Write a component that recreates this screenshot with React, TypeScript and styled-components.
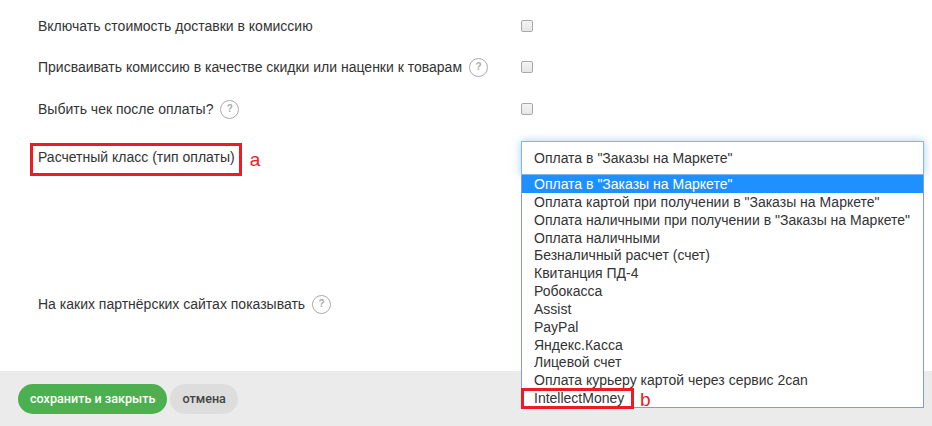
import React from 'react';
import styled, { createGlobalStyle } from 'styled-components';

const RED = '#ed1c24';

const GlobalStyle = createGlobalStyle`
    html, body {
        margin: 0;
        padding: 0;
        background: white;
    }
    body {
        font-family: "Liberation Sans", Arial, sans-serif;
        font-size: 14px;
        color: #333;
    }
`;

const Screen = styled.div`
    width: 932px;
    height: 426px;
    display: flex;
    flex-direction: column;
    overflow: hidden;
`;

const Form = styled.div`
    flex: 1;
    min-height: 0;
    padding: 5px 9px 0 38px;
`;

const Row = styled.div<{ $height: number }>`
    display: grid;
    grid-template-columns: 483px 402px;
    align-items: center;
    height: ${(p) => p.$height}px;
`;

const PartnersRow = styled(Row)`
    margin-top: 74px;
`;

const Label = styled.div`
    display: flex;
    align-items: center;
    gap: 7px;
    line-height: 20px;
`;

const Help = styled.span`
    width: 17px;
    height: 17px;
    border: 1px solid #aaa;
    border-radius: 50%;
    display: inline-flex;
    align-items: center;
    justify-content: center;
    color: #aaa;
    font-size: 10px;
    font-weight: bold;
    flex: none;
`;

const Check = styled.span`
    width: 10px;
    height: 10px;
    border: 1px solid #a9a9a9;
    border-radius: 2px;
    background: linear-gradient(#f4f4f4, #e6e6e6);
`;

const MarkedRow = styled.div`
    display: flex;
    align-items: center;
    margin-left: -8px;
    margin-top: 2px;
`;

const MarkedLabel = styled.div`
    border: 3px solid ${RED};
    padding: 0 4px 0 5px;
    height: 27px;
    line-height: 23px;
`;

const Note = styled.span`
    color: ${RED};
    font-size: 19px;
    line-height: 20px;
`;

const LabelNote = styled(Note)`
    margin-left: 8px;
    margin-top: 2px;
`;

const SelectBox = styled.div`
    position: relative;
    height: 34px;
    width: 403px;
`;

const SelectValue = styled.div`
    box-sizing: border-box;
    height: 34px;
    padding-left: 12px;
    line-height: 32px;
    border: 1px solid #80b5f5;
    background: white;
    box-shadow: 0 0 8px rgba(102, 175, 233, 0.6);
`;

const Dropdown = styled.div`
    position: absolute;
    top: 34px;
    left: 0;
    right: 0;
    box-sizing: border-box;
    border: 1px solid #7f9ddb;
    border-top: none;
    background: white;
    z-index: 2;
`;

const Option = styled.div<{ $selected?: boolean }>`
    height: 17.85px;
    line-height: 18px;
    padding-left: 12px;
    white-space: nowrap;
    background: ${(p) => (p.$selected ? '#1e90ff' : 'transparent')};
    color: ${(p) => (p.$selected ? 'white' : '#333')};
`;

const MarkedOption = styled(Option)`
    position: relative;
`;

const OptionFrame = styled.span`
    position: absolute;
    left: -1px;
    top: -1px;
    width: 107px;
    height: 15px;
    border: 3px solid ${RED};
`;

const OptionNote = styled(Note)`
    position: absolute;
    left: 118px;
    top: 1px;
`;

const Footer = styled.div`
    flex: none;
    height: 55px;
    background: #ebebeb;
    display: flex;
    align-items: center;
    gap: 3px;
    padding: 0 0 0 18px;
`;

const Button = styled.button<{ $primary?: boolean }>`
    height: 30px;
    border: none;
    border-radius: 15px;
    padding: 0 12px;
    font-family: Roboto, sans-serif;
    font-size: 12.6px;
    font-weight: 500;
    background: ${(p) => (p.$primary ? '#4caf50' : '#ddd')};
    color: ${(p) => (p.$primary ? 'white' : '#444')};
`;

const options = [
    'Оплата картой при получении в "Заказы на Маркете"',
    'Оплата наличными при получении в "Заказы на Маркете"',
    'Оплата наличными',
    'Безналичный расчет (счет)',
    'Квитанция ПД-4',
    'Робокасса',
    'Assist',
    'PayPal',
    'Яндекс.Касса',
    'Лицевой счет',
    'Оплата курьеру картой через сервис 2can',
];

const App: React.FunctionComponent = () => (
    <Screen>
        <GlobalStyle />
        <Form>
            <Row $height={42}>
                <Label>Включать стоимость доставки в комиссию</Label>
                <Check />
            </Row>
            <Row $height={40}>
                <Label>Присваивать комиссию в качестве скидки или наценки к товарам <Help>?</Help></Label>
                <Check />
            </Row>
            <Row $height={44}>
                <Label>Выбить чек после оплаты? <Help>?</Help></Label>
                <Check />
            </Row>
            <Row $height={54}>
                <MarkedRow>
                    <MarkedLabel>Расчетный класс (тип оплаты)</MarkedLabel>
                    <LabelNote>a</LabelNote>
                </MarkedRow>
                <SelectBox>
                    <SelectValue>Оплата в "Заказы на Маркете"</SelectValue>
                    <Dropdown>
                        <Option $selected>Оплата в "Заказы на Маркете"</Option>
                        {options.map((o) => <Option key={o}>{o}</Option>)}
                        <MarkedOption>
                            IntellectMoney
                            <OptionFrame />
                            <OptionNote>b</OptionNote>
                        </MarkedOption>
                    </Dropdown>
                </SelectBox>
            </Row>
            <PartnersRow $height={90}>
                <Label>На каких партнёрских сайтах показывать <Help>?</Help></Label>
            </PartnersRow>
        </Form>
        <Footer>
            <Button $primary>сохранить и закрыть</Button>
            <Button>отмена</Button>
        </Footer>
    </Screen>
);

export default App;
